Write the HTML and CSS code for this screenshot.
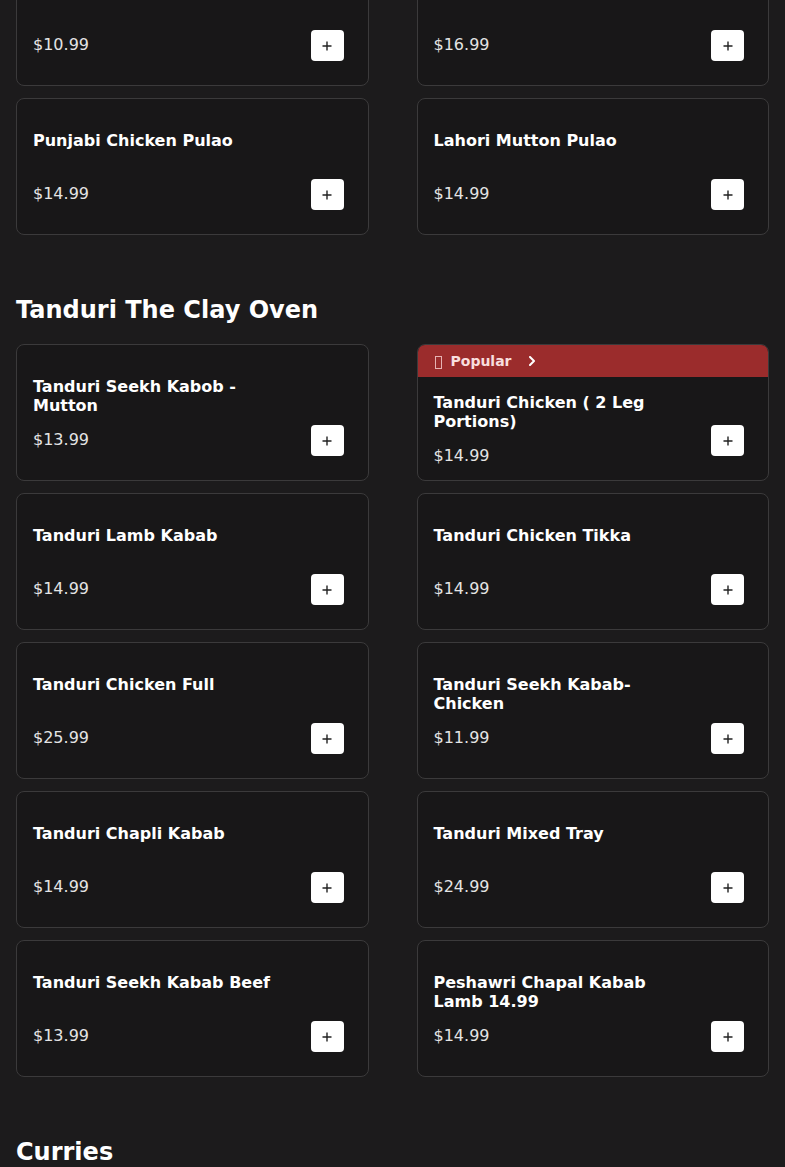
FILE: index.html
```html
<!DOCTYPE html>
<html lang="en">
<head>
  <meta charset="UTF-8" />
  <meta name="viewport" content="width=device-width, initial-scale=1.0" />
  <title>Menu</title>
  <link rel="stylesheet" href="styles.css">
</head>
<body>
  <div class="menu">
    <section class="section">
      <div class="grid">
        <div class="card">
          <div class="card-body">
            <div class="info"><h3>Vegetable Pulao</h3><p class="price">$10.99</p></div>
            <button class="add"><svg width="10" height="10" viewBox="0 0 10 10"><path d="M5 0.5v9M0.5 5h9" /></svg></button>
          </div>
        </div>
        <div class="card">
          <div class="card-body">
            <div class="info"><h3>Special Mutton Pulao</h3><p class="price">$16.99</p></div>
            <button class="add"><svg width="10" height="10" viewBox="0 0 10 10"><path d="M5 0.5v9M0.5 5h9" /></svg></button>
          </div>
        </div>
        <div class="card">
          <div class="card-body">
            <div class="info"><h3>Punjabi Chicken Pulao</h3><p class="price">$14.99</p></div>
            <button class="add"><svg width="10" height="10" viewBox="0 0 10 10"><path d="M5 0.5v9M0.5 5h9" /></svg></button>
          </div>
        </div>
        <div class="card">
          <div class="card-body">
            <div class="info"><h3>Lahori Mutton Pulao</h3><p class="price">$14.99</p></div>
            <button class="add"><svg width="10" height="10" viewBox="0 0 10 10"><path d="M5 0.5v9M0.5 5h9" /></svg></button>
          </div>
        </div>
      </div>
    </section>

    <section class="section">
      <h2>Tanduri The Clay Oven</h2>
      <div class="grid">
        <div class="card">
          <div class="card-body">
            <div class="info"><h3>Tanduri Seekh Kabob - Mutton</h3><p class="price">$13.99</p></div>
            <button class="add"><svg width="10" height="10" viewBox="0 0 10 10"><path d="M5 0.5v9M0.5 5h9" /></svg></button>
          </div>
        </div>
        <div class="card">
          <div class="popular">
            <span class="tofu"></span>
            <span>Popular</span>
            <svg class="chev" width="6" height="10" viewBox="0 0 6 10"><path d="M1 1l4 4-4 4" /></svg>
          </div>
          <div class="card-body">
            <div class="info"><h3>Tanduri Chicken ( 2 Leg Portions)</h3><p class="price">$14.99</p></div>
            <button class="add"><svg width="10" height="10" viewBox="0 0 10 10"><path d="M5 0.5v9M0.5 5h9" /></svg></button>
          </div>
        </div>
        <div class="card">
          <div class="card-body">
            <div class="info"><h3>Tanduri Lamb Kabab</h3><p class="price">$14.99</p></div>
            <button class="add"><svg width="10" height="10" viewBox="0 0 10 10"><path d="M5 0.5v9M0.5 5h9" /></svg></button>
          </div>
        </div>
        <div class="card">
          <div class="card-body">
            <div class="info"><h3>Tanduri Chicken Tikka</h3><p class="price">$14.99</p></div>
            <button class="add"><svg width="10" height="10" viewBox="0 0 10 10"><path d="M5 0.5v9M0.5 5h9" /></svg></button>
          </div>
        </div>
        <div class="card">
          <div class="card-body">
            <div class="info"><h3>Tanduri Chicken Full</h3><p class="price">$25.99</p></div>
            <button class="add"><svg width="10" height="10" viewBox="0 0 10 10"><path d="M5 0.5v9M0.5 5h9" /></svg></button>
          </div>
        </div>
        <div class="card">
          <div class="card-body">
            <div class="info"><h3>Tanduri Seekh Kabab-Chicken</h3><p class="price">$11.99</p></div>
            <button class="add"><svg width="10" height="10" viewBox="0 0 10 10"><path d="M5 0.5v9M0.5 5h9" /></svg></button>
          </div>
        </div>
        <div class="card">
          <div class="card-body">
            <div class="info"><h3>Tanduri Chapli Kabab</h3><p class="price">$14.99</p></div>
            <button class="add"><svg width="10" height="10" viewBox="0 0 10 10"><path d="M5 0.5v9M0.5 5h9" /></svg></button>
          </div>
        </div>
        <div class="card">
          <div class="card-body">
            <div class="info"><h3>Tanduri Mixed Tray</h3><p class="price">$24.99</p></div>
            <button class="add"><svg width="10" height="10" viewBox="0 0 10 10"><path d="M5 0.5v9M0.5 5h9" /></svg></button>
          </div>
        </div>
        <div class="card">
          <div class="card-body">
            <div class="info"><h3>Tanduri Seekh Kabab Beef</h3><p class="price">$13.99</p></div>
            <button class="add"><svg width="10" height="10" viewBox="0 0 10 10"><path d="M5 0.5v9M0.5 5h9" /></svg></button>
          </div>
        </div>
        <div class="card">
          <div class="card-body">
            <div class="info"><h3>Peshawri Chapal Kabab Lamb 14.99</h3><p class="price">$14.99</p></div>
            <button class="add"><svg width="10" height="10" viewBox="0 0 10 10"><path d="M5 0.5v9M0.5 5h9" /></svg></button>
          </div>
        </div>
      </div>
    </section>

    <section class="section">
      <h2>Curries</h2>
    </section>
  </div>
</body>
</html>
```

FILE: styles.css
```css
* {
  margin: 0;
  padding: 0;
  box-sizing: border-box;
}
body {
  font-family: 'DejaVu Sans', sans-serif;
  background: #1c1b1c;
  color: #fff;
  overflow: hidden;
}
.menu {
  padding: 0 16px;
  margin-top: -51px;
}
.section + .section {
  margin-top: 61px;
}
.section h2 {
  font-size: 24px;
  line-height: 29px;
  font-weight: bold;
  margin-bottom: 19px;
}
.grid {
  display: grid;
  grid-template-columns: 1fr 1fr;
  column-gap: 48px;
  row-gap: 12px;
}
.card {
  background: #181718;
  border: 1px solid #3b3a3b;
  border-radius: 8px;
  min-height: 137px;
  display: flex;
  flex-direction: column;
  overflow: hidden;
}
.popular {
  height: 32px;
  background: #9b2c2c;
  color: #f8dede;
  font-size: 14px;
  font-weight: bold;
  display: flex;
  align-items: center;
  padding-left: 16px;
}
.tofu {
  width: 7px;
  height: 13px;
  border: 1px solid #e6b3b3;
  margin: 2px 9px 0 1px;
}
.chev {
  margin-left: 17px;
}
.chev path {
  fill: none;
  stroke: #fff;
  stroke-width: 2;
  stroke-linecap: round;
  stroke-linejoin: round;
}
.card-body {
  flex: 1;
  display: flex;
  justify-content: space-between;
  padding: 0 24px 0 16px;
}
.info {
  align-self: center;
  max-width: 252px;
}
.info h3 {
  font-size: 16px;
  line-height: 19px;
  min-height: 38px;
  font-weight: bold;
  color: #fff;
  margin-bottom: 15px;
}
.price {
  font-size: 16px;
  line-height: 19px;
  color: #e4e4e4;
}
.add {
  align-self: flex-end;
  margin-bottom: 24px;
  width: 33px;
  height: 31px;
  background: #fff;
  border: none;
  border-radius: 4px;
  display: flex;
  align-items: center;
  justify-content: center;
  cursor: pointer;
}
.add path {
  stroke: #222;
  stroke-width: 1.4;
  fill: none;
}
```
